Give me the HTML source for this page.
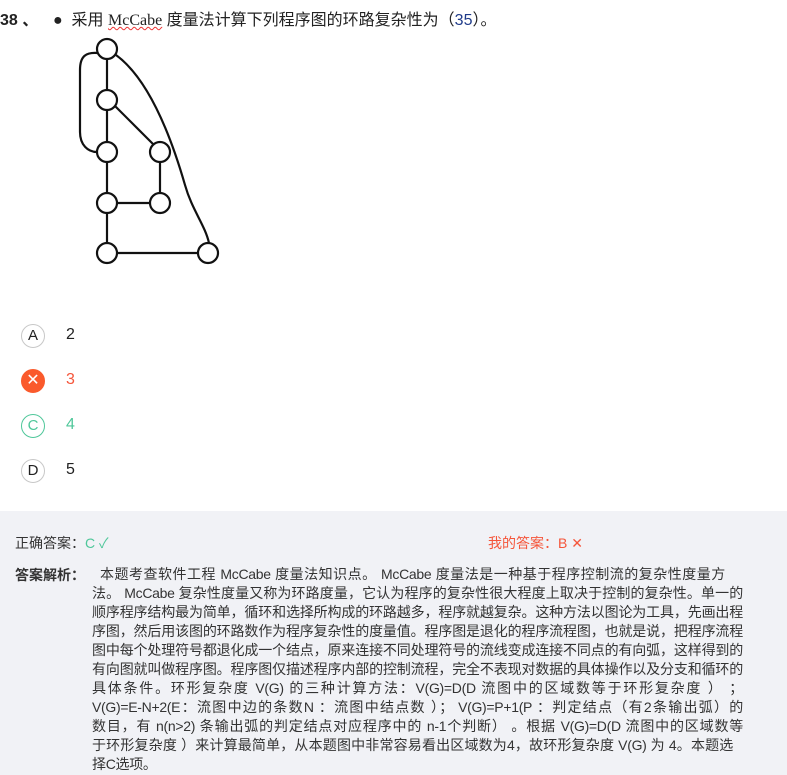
<!DOCTYPE html>
<html><head><meta charset="utf-8"><style>
body{margin:0;width:787px;height:775px;overflow:hidden;background:#fff;font-family:"Liberation Sans","Noto Sans CJK SC",sans-serif;color:#222;position:relative}
.a{position:absolute;white-space:nowrap}
.c{position:absolute;width:22px;height:22px;border-radius:50%;border:1px solid #c8c8c8;text-align:center;line-height:22px;font-size:15px;left:21px}
.o{position:absolute;left:66px;font-size:16px}
.g{position:absolute;left:0;top:511px;width:787px;height:264px;background:#f1f2f6}
.l{position:absolute;left:92px;width:651px;font-size:14px;height:19px;line-height:19px;color:#333;white-space:nowrap;text-align:justify;text-align-last:justify;letter-spacing:-0.3px}
</style></head><body>
<div class="a" style="left:0;top:6px;font-size:16px;font-weight:bold">38 、</div>
<div class="a" style="left:53px;top:6px;font-size:16px">● &nbsp;采用 <span style="font-family:'Liberation Serif',serif;text-decoration:underline wavy #e33;text-decoration-thickness:1px">McCabe</span> 度量法计算下列程序图的环路复杂性为（<span style="color:#1f3b8a">35</span>）。</div>
<svg class="a" style="left:0;top:0" width="260" height="280">
<g fill="none" stroke="#111" stroke-width="2.2">
<path d="M98,53 C86,52 80,56 80,70 L80,132 C80,145 88,152 97,152"/>
<path d="M116,55 C150,80 172,140 185,185 C192,210 205,225 209,243"/>
<line x1="107" y1="59" x2="107" y2="90"/><line x1="107" y1="110" x2="107" y2="142"/>
<line x1="115" y1="106" x2="153" y2="144"/><line x1="107" y1="162" x2="107" y2="193"/>
<line x1="160" y1="162" x2="160" y2="193"/><line x1="117" y1="203" x2="150" y2="203"/>
<line x1="107" y1="213" x2="107" y2="243"/><line x1="117" y1="253" x2="198" y2="253"/>
<circle cx="107" cy="49" r="10"/><circle cx="107" cy="100" r="10"/><circle cx="107" cy="152" r="10"/><circle cx="160" cy="152" r="10"/><circle cx="107" cy="203" r="10"/><circle cx="160" cy="203" r="10"/><circle cx="107" cy="253" r="10"/><circle cx="208" cy="253" r="10"/>
</g></svg>
<div class="c" style="top:324px;color:#222">A</div><div class="o" style="top:326px">2</div>
<div class="c" style="top:369px;background:#fa5a2c;border-color:#fa5a2c;color:#fff;font-size:16px">✕</div><div class="o" style="top:371px;color:#f5553a">3</div>
<div class="c" style="top:414px;border-color:#4fc79a;color:#4fc79a">C</div><div class="o" style="top:416px;color:#4fc79a">4</div>
<div class="c" style="top:459px">D</div><div class="o" style="top:461px">5</div>
<div class="g"></div>
<div class="a" style="left:15px;top:533px;font-size:14px;color:#333">正确答案：<span style="color:#4fc79a">C ✓</span></div>
<div class="a" style="left:488px;top:533px;font-size:14px;color:#f5553a">我的答案：B ✕</div>
<div class="a" style="left:15px;top:565px;font-size:14px;font-weight:bold;color:#333">答案解析：</div>
<div class="l" style="top:565px;left:100px;width:625px">本题考查软件工程 McCabe 度量法知识点。 McCabe 度量法是一种基于程序控制流的复杂性度量方</div>
<div class="l" style="top:584px">法。 McCabe 复杂性度量又称为环路度量，它认为程序的复杂性很大程度上取决于控制的复杂性。单一的</div>
<div class="l" style="top:603px">顺序程序结构最为简单，循环和选择所构成的环路越多，程序就越复杂。这种方法以图论为工具，先画出程</div>
<div class="l" style="top:622px">序图，然后用该图的环路数作为程序复杂性的度量值。程序图是退化的程序流程图，也就是说，把程序流程</div>
<div class="l" style="top:641px">图中每个处理符号都退化成一个结点，原来连接不同处理符号的流线变成连接不同点的有向弧，这样得到的</div>
<div class="l" style="top:660px">有向图就叫做程序图。程序图仅描述程序内部的控制流程，完全不表现对数据的具体操作以及分支和循环的</div>
<div class="l" style="top:679px">具体条件。环形复杂度 V(G) 的三种计算方法：V(G)=D(D 流图中的区域数等于环形复杂度 ） ；</div>
<div class="l" style="top:698px">V(G)=E-N+2(E：流图中边的条数N ：流图中结点数 ）； V(G)=P+1(P ：判定结点（有2条输出弧）的</div>
<div class="l" style="top:717px">数目，有 n(n&gt;2) 条输出弧的判定结点对应程序中的 n-1个判断） 。根据 V(G)=D(D 流图中的区域数等</div>
<div class="l" style="top:736px;width:641px">于环形复杂度 ）来计算最简单，从本题图中非常容易看出区域数为4，故环形复杂度 V(G) 为 4。本题选</div>
<div class="l" style="top:755px;text-align-last:left">择C选项。</div>
</body></html>
